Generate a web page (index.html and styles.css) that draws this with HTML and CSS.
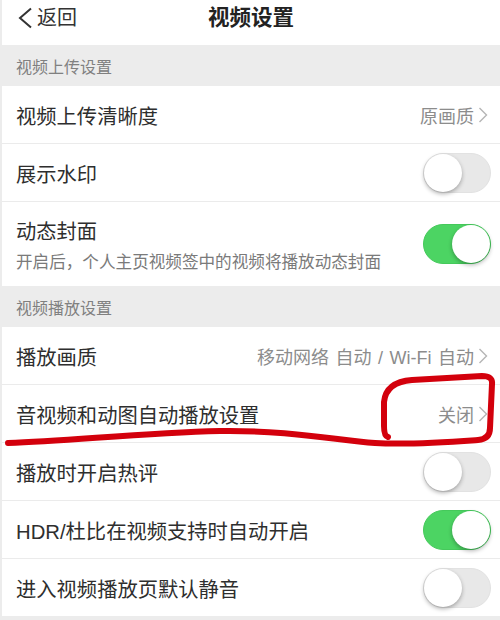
FILE: index.html
```html
<!DOCTYPE html>
<html lang="zh-CN">
<head>
<meta charset="utf-8">
<title>视频设置</title>
<link rel="stylesheet" href="styles.css">
</head>
<body>
<div class="page">
  <header class="nav">
    <div class="back">
      <svg class="back-icon" width="16" height="22" viewBox="0 0 16 22"><polyline points="14,1.5 3,11 14,20.5" fill="none" stroke="#333" stroke-width="2" stroke-linejoin="miter"/></svg>
      <span>返回</span>
    </div>
    <div class="title">视频设置</div>
  </header>

  <div class="section-head">视频上传设置</div>
  <div class="group">
    <div class="row">
      <div class="label">视频上传清晰度</div>
      <div class="value">原画质<svg class="chev" width="10" height="18" viewBox="0 0 10 18"><polyline points="1.5,2 8.5,9 1.5,16" fill="none" stroke="#b5b5b5" stroke-width="1.4"/></svg></div>
    </div>
    <div class="row">
      <div class="label">展示水印</div>
      <div class="switch"><div class="knob"></div></div>
    </div>
    <div class="row tall">
      <div class="texts">
        <div class="label">动态封面</div>
        <div class="sub">开启后，个人主页视频签中的视频将播放动态封面</div>
      </div>
      <div class="switch on"><div class="knob"></div></div>
    </div>
  </div>

  <div class="section-head">视频播放设置</div>
  <div class="group">
    <div class="row">
      <div class="label">播放画质</div>
      <div class="value">移动网络 自动 / Wi-Fi 自动<svg class="chev" width="10" height="18" viewBox="0 0 10 18"><polyline points="1.5,2 8.5,9 1.5,16" fill="none" stroke="#b5b5b5" stroke-width="1.4"/></svg></div>
    </div>
    <div class="row">
      <div class="label">音视频和动图自动播放设置</div>
      <div class="value">关闭<svg class="chev" width="10" height="18" viewBox="0 0 10 18"><polyline points="1.5,2 8.5,9 1.5,16" fill="none" stroke="#b5b5b5" stroke-width="1.4"/></svg></div>
    </div>
    <div class="row">
      <div class="label">播放时开启热评</div>
      <div class="switch"><div class="knob"></div></div>
    </div>
    <div class="row">
      <div class="label">HDR/杜比在视频支持时自动开启</div>
      <div class="switch on"><div class="knob"></div></div>
    </div>
    <div class="row">
      <div class="label">进入视频播放页默认静音</div>
      <div class="switch"><div class="knob"></div></div>
    </div>
  </div>
  <div class="footer-gap"></div>

  <svg class="mark" width="500" height="620" viewBox="0 0 500 620">
    <path d="M8 443 C 70 441, 140 433, 220 431 C 290 430, 335 440, 375 443 C 410 445, 450 442, 478 440 Q 490 439 490 428 L 492 384 Q 493 376 482 376 L 412 380 Q 386 382 384 402 L 384 426 Q 384 436 388 437" fill="none" stroke="#d3000c" stroke-width="6" stroke-linecap="round" stroke-linejoin="round"/>
  </svg>
</div>
</body>
</html>
```

FILE: styles.css
```css
html, body {
  margin: 0;
  padding: 0;
  background: #ffffff;
}

.page {
  position: relative;
  width: 500px;
  height: 620px;
  overflow: hidden;
  font-family: "Liberation Sans", "Noto Sans CJK SC", sans-serif;
  color: #333333;
  background: #ffffff;
  border-left: 2px solid #ececec;
  box-sizing: border-box;
}

.nav {
  position: relative;
  height: 45px;
  display: flex;
  align-items: flex-start;
  justify-content: center;
  background: #ffffff;
}

.back {
  position: absolute;
  left: 15px;
  top: 6px;
  display: flex;
  align-items: center;
  gap: 4px;
  font-size: 20px;
  line-height: 24px;
  color: #333333;
}

.back-icon {
  display: block;
}

.title {
  margin-top: 5px;
  font-size: 21.5px;
  line-height: 26px;
  font-weight: bold;
  color: #222222;
}

.section-head {
  height: 41px;
  display: flex;
  align-items: center;
  padding-left: 14px;
  background: #ececec;
  font-size: 16px;
  color: #808080;
}

.group {
  display: flex;
  flex-direction: column;
}

.row {
  height: 57px;
  display: flex;
  align-items: center;
  justify-content: space-between;
  padding: 0 9px 0 14px;
  border-bottom: 1px solid #ebebeb;
  background: #ffffff;
}

.row:last-child {
  border-bottom: none;
}

.row.tall {
  height: 84px;
}

.label {
  font-size: 20.3px;
  color: #2e2e2e;
  white-space: nowrap;
}

.texts {
  display: flex;
  flex-direction: column;
  gap: 4px;
}

.sub {
  font-size: 16.6px;
  color: #7a7a7a;
  white-space: nowrap;
}

.value {
  display: flex;
  align-items: center;
  gap: 4px;
  padding-right: 3px;
  font-size: 18px;
  word-spacing: 1.5px;
  color: #8c8c8c;
  white-space: nowrap;
}

.chev {
  display: block;
}

.switch {
  position: relative;
  width: 68px;
  height: 40px;
  border-radius: 20px;
  background: #e8e8e8;
  box-sizing: border-box;
  border: 1px solid #e2e2e2;
  flex-shrink: 0;
}

.switch .knob {
  position: absolute;
  top: 0;
  left: 0;
  width: 38px;
  height: 38px;
  border-radius: 50%;
  background: #ffffff;
  box-shadow: 0 2px 4px rgba(0, 0, 0, 0.3);
}

.switch.on {
  background: #4cd463;
  border-color: #45c95b;
}

.switch.on .knob {
  left: auto;
  right: 0;
}

.footer-gap {
  height: 10px;
  background: #ececec;
}

.mark {
  position: absolute;
  left: -2px;
  top: 0;
  pointer-events: none;
}
```
